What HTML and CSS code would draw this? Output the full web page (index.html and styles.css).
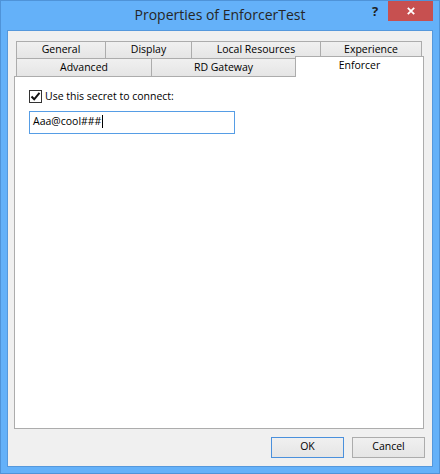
FILE: index.html
```html
<!DOCTYPE html>
<html lang="en">
<head>
    <meta charset="UTF-8">
    <title>Properties of EnforcerTest</title>
    <link rel="stylesheet" href="styles.css">
</head>
<body>
    <div class="window">
        <!-- === TITLE BAR === -->
        <header class="titlebar">
            <span></span>
            <div class="title">Properties of EnforcerTest</div>
            <div class="controls">
                <span class="help">?</span>
                <span class="close">
                    <svg width="8" height="8" viewBox="0 0 8 8">
                        <path d="M0.8 0.8 L7.2 7.2 M7.2 0.8 L0.8 7.2" stroke="#fff" stroke-width="1.8" fill="none"/>
                    </svg>
                </span>
            </div>
        </header>

        <!-- === CLIENT AREA === -->
        <div class="client">
            <div class="tabs">
                <div class="tab-row row-back">
                    <div class="tab tab-general">General</div>
                    <div class="tab tab-display">Display</div>
                    <div class="tab tab-local">Local Resources</div>
                    <div class="tab tab-experience">Experience</div>
                </div>
                <div class="tab-row row-front">
                    <div class="tab tab-advanced">Advanced</div>
                    <div class="tab tab-gateway">RD Gateway</div>
                    <div class="tab tab-enforcer selected">Enforcer</div>
                </div>
            </div>

            <section class="panel">
                <label class="check-row">
                    <span class="checkbox">
                        <svg width="11" height="11" viewBox="0 0 11 11">
                            <path d="M1.5 5.5 L4.2 8.3 L9.5 1.8" stroke="#111" stroke-width="2" fill="none"/>
                        </svg>
                    </span>
                    Use this secret to connect:
                </label>
                <div class="textbox">Aaa@cool###<span class="caret"></span></div>
            </section>

            <footer class="footer">
                <button class="btn btn-default">OK</button>
                <button class="btn">Cancel</button>
            </footer>
        </div>
    </div>
</body>
</html>
```

FILE: styles.css
```css
/* === BASE STYLES === */
* {
    margin: 0;
    padding: 0;
    box-sizing: border-box;
}

html,
body {
    width: 440px;
    height: 474px;
    overflow: hidden;
}

body {
    font-family: "Open Sans", "Noto Sans", sans-serif;
    font-size: 10.5px;
    color: #000;
}

/* === WINDOW FRAME === */
.window {
    width: 440px;
    height: 474px;
    display: flex;
    flex-direction: column;
    background: #64b1f9;
    border: 1px solid #4f93d8;
}

.titlebar {
    height: 29px;
    display: grid;
    grid-template-columns: 1fr auto 1fr;
    align-items: start;
}

.title {
    font-size: 14px;
    line-height: 19px;
    padding-top: 4px;
    color: #262626;
    white-space: nowrap;
}

.controls {
    justify-self: end;
    display: flex;
    margin-right: 6px;
}

.help {
    width: 26px;
    height: 20px;
    text-align: center;
    font-weight: 700;
    font-size: 13px;
    line-height: 20px;
    color: #1f1f1f;
}

.close {
    width: 45px;
    height: 20px;
    background: #c75050;
    display: flex;
    align-items: center;
    justify-content: center;
}

/* === CLIENT AREA === */
.client {
    flex: 1;
    margin: 0 6px 6px;
    border: 1px solid #5598dc;
    background: #f0f0f0;
    display: flex;
    flex-direction: column;
    padding: 10px 7px 8px 6px;
}

/* === TABS === */
.tabs {
    margin-left: 2px;
}

.tab-row {
    display: flex;
}

.row-back {
    height: 17px;
}

.row-front {
    height: 18px;
}

.tab {
    border: 1px solid #acacac;
    border-bottom: none;
    background: linear-gradient(#f0f0f0, #e5e5e5);
    text-align: center;
    line-height: 15px;
    white-space: nowrap;
}

.tab + .tab {
    margin-left: -1px;
}

.row-front .tab {
    line-height: 16px;
}

.tab-general { width: 90px; }
.tab-display { width: 87px; }
.tab-local { width: 130px; }
.tab-experience { width: 102px; }
.tab-advanced { width: 136px; }
.tab-gateway { width: 145px; }
.tab-enforcer { width: 129px; }

.tab.selected {
    position: relative;
    z-index: 1;
    background: #fff;
    height: 21px;
    margin-top: -2px;
}

/* === PANEL === */
.panel {
    flex: 1;
    margin-right: 1px;
    background: #fff;
    border: 1px solid #acacac;
    padding: 13px 14px;
}

.check-row {
    display: flex;
    align-items: center;
    gap: 3px;
    height: 13px;
    line-height: 13px;
}

.checkbox {
    width: 13px;
    height: 13px;
    border: 1px solid #333;
    background: #fff;
    display: flex;
    align-items: center;
    justify-content: center;
}

.textbox {
    margin-top: 8px;
    width: 206px;
    height: 23px;
    border: 1px solid #569de5;
    padding: 0 3px;
    line-height: 19px;
    display: flex;
    align-items: flex-start;
    white-space: nowrap;
}

.caret {
    width: 1px;
    height: 13px;
    background: #000;
    margin: 3px 0 0 1px;
}

/* === BUTTONS === */
.footer {
    display: flex;
    justify-content: flex-end;
    gap: 8px;
    margin-top: 8px;
}

.btn {
    width: 73px;
    height: 21px;
    border: 1px solid #acacac;
    background: linear-gradient(#f0f0f0, #e5e5e5);
    font-family: inherit;
    font-size: 10.5px;
    line-height: 16px;
    padding-bottom: 3px;
    color: #000;
}

.btn-default {
    border-color: #4a90dc;
}
```
